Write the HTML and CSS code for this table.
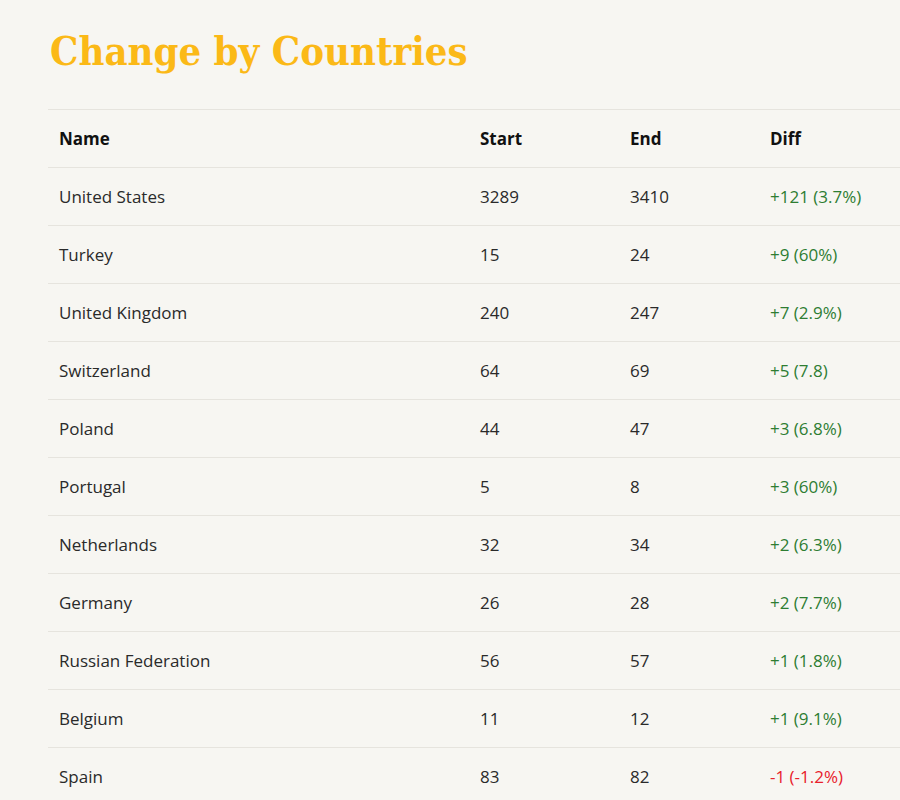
FILE: index.html
```html
<!DOCTYPE html>
<html>
<head>
<meta charset="utf-8">
<link rel="stylesheet" href="styles.css">
</head>
<body>
<div class="page">
  <h1 class="title">Change by Countries</h1>
  <table class="tbl">
    <thead>
      <tr><th class="c-name">Name</th><th class="c-start">Start</th><th class="c-end">End</th><th class="c-diff">Diff</th></tr>
    </thead>
    <tbody>
      <tr><td>United States</td><td>3289</td><td>3410</td><td class="up">+121 (3.7%)</td></tr>
      <tr><td>Turkey</td><td>15</td><td>24</td><td class="up">+9 (60%)</td></tr>
      <tr><td>United Kingdom</td><td>240</td><td>247</td><td class="up">+7 (2.9%)</td></tr>
      <tr><td>Switzerland</td><td>64</td><td>69</td><td class="up">+5 (7.8)</td></tr>
      <tr><td>Poland</td><td>44</td><td>47</td><td class="up">+3 (6.8%)</td></tr>
      <tr><td>Portugal</td><td>5</td><td>8</td><td class="up">+3 (60%)</td></tr>
      <tr><td>Netherlands</td><td>32</td><td>34</td><td class="up">+2 (6.3%)</td></tr>
      <tr><td>Germany</td><td>26</td><td>28</td><td class="up">+2 (7.7%)</td></tr>
      <tr><td>Russian Federation</td><td>56</td><td>57</td><td class="up">+1 (1.8%)</td></tr>
      <tr><td>Belgium</td><td>11</td><td>12</td><td class="up">+1 (9.1%)</td></tr>
      <tr><td>Spain</td><td>83</td><td>82</td><td class="down">-1 (-1.2%)</td></tr>
    </tbody>
  </table>
</div>
</body>
</html>
```
FILE: styles.css
```css
html, body {
  margin: 0;
  padding: 0;
  background: #f7f6f2;
  overflow: hidden;
}
.page {
  padding: 0 0 0 48px;
  width: 920px;
}
.title {
  margin: 0;
  padding: 26px 0 0 2px;
  height: 109px;
  box-sizing: border-box;
  font-family: "DejaVu Serif", serif;
  font-stretch: condensed;
  font-weight: bold;
  font-size: 39.7px;
  line-height: 50px;
  color: #fbb917;
}
.tbl {
  border-collapse: collapse;
  width: 880px;
  font-family: "Open Sans", "Noto Sans", sans-serif;
  font-size: 17px;
  color: #2a2a2a;
  table-layout: fixed;
}
.tbl th, .tbl td {
  height: 57px;
  padding: 0 0 0 11px;
  text-align: left;
  vertical-align: middle;
  border-top: 1px solid #e6e4de;
}
.tbl th {
  font-weight: bold;
  color: #111;
}
.c-name { width: 410px; }
.c-start { width: 139px; }
.c-end { width: 129px; }
.c-diff { width: auto; }
.up { color: #2e7d32; }
.down { color: #e8212b; }
```
